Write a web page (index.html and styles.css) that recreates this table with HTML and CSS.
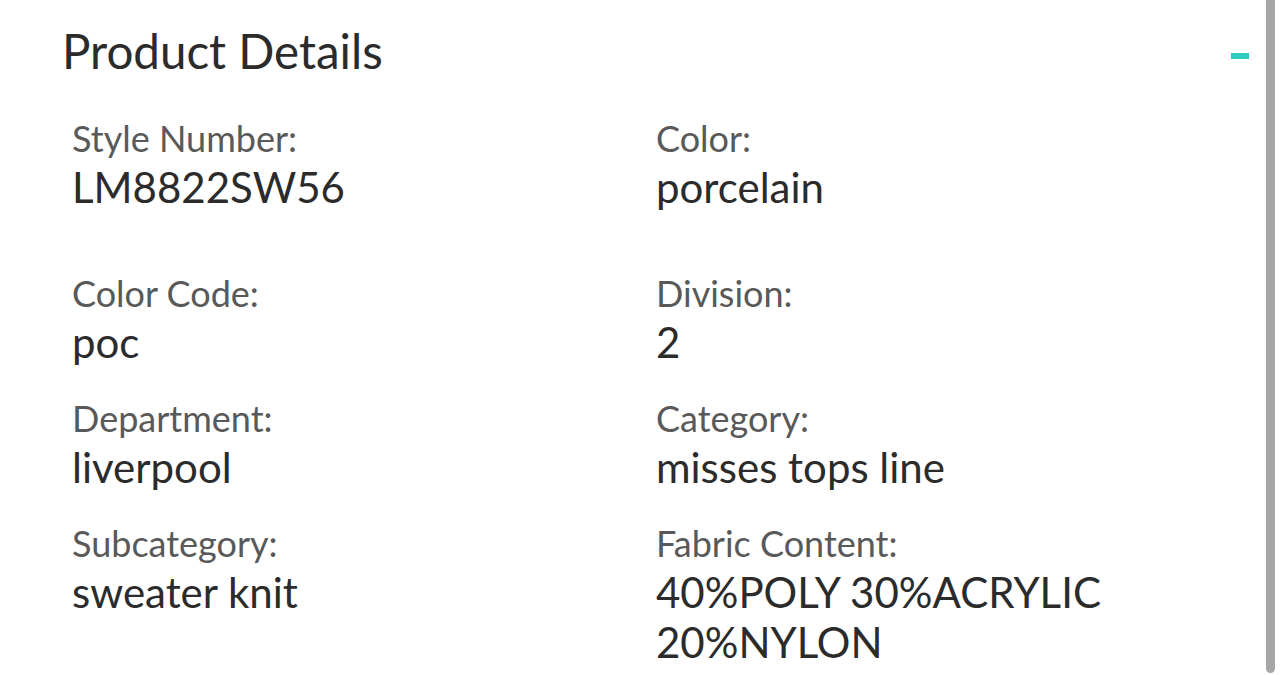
FILE: index.html
```html
<!DOCTYPE html>
<html>
<head>
<meta charset="utf-8">
<link rel="stylesheet" href="styles.css">
</head>
<body>
<div class="panel">
  <div class="panel-header">
    <h1 class="panel-title">Product Details</h1>
    <span class="collapse-icon"></span>
  </div>
  <div class="details">
    <div class="field first">
      <div class="label">Style Number:</div>
      <div class="value">LM8822SW56</div>
    </div>
    <div class="field first">
      <div class="label">Color:</div>
      <div class="value">porcelain</div>
    </div>
    <div class="field">
      <div class="label">Color Code:</div>
      <div class="value">poc</div>
    </div>
    <div class="field">
      <div class="label">Division:</div>
      <div class="value">2</div>
    </div>
    <div class="field">
      <div class="label">Department:</div>
      <div class="value">liverpool</div>
    </div>
    <div class="field">
      <div class="label">Category:</div>
      <div class="value">misses tops line</div>
    </div>
    <div class="field">
      <div class="label">Subcategory:</div>
      <div class="value">sweater knit</div>
    </div>
    <div class="field">
      <div class="label">Fabric Content:</div>
      <div class="value">40%POLY 30%ACRYLIC 20%NYLON</div>
    </div>
  </div>
</div>
<div class="scrollbar"></div>
</body>
</html>
```
FILE: styles.css
```css
html, body {
  margin: 0;
  padding: 0;
  background: #ffffff;
}
body {
  font-family: Lato, "Open Sans", sans-serif;
  color: #2b2b2b;
  overflow: hidden;
  height: 675px;
}
.panel {
  padding: 0 35px 0 62px;
}
.panel-header {
  display: flex;
  align-items: center;
  justify-content: space-between;
  height: 100px;
}
.panel-title {
  margin: 0;
  font-size: 47.5px;
  font-weight: 400;
  color: #2b2b2b;
  line-height: 1;
  position: relative;
  top: 1px;
}
.collapse-icon {
  display: block;
  width: 18px;
  height: 6px;
  background: #2fcdc1;
  position: relative;
  top: 6px;
}
.details {
  display: grid;
  grid-template-columns: 584px 1fr;
  padding-left: 10px;
  padding-top: 15px;
}
.field {
  padding-bottom: 28px;
}
.field.first {
  padding-bottom: 58px;
}
.label {
  font-size: 36px;
  line-height: 47px;
  color: #595959;
}
.value {
  font-size: 42px;
  line-height: 50px;
  color: #2b2b2b;
  max-width: 480px;
}
.scrollbar {
  position: fixed;
  top: 0;
  right: 9px;
  width: 9px;
  height: 673px;
  background: #a6a6a6;
  border-radius: 0 0 5px 5px;
}
```
